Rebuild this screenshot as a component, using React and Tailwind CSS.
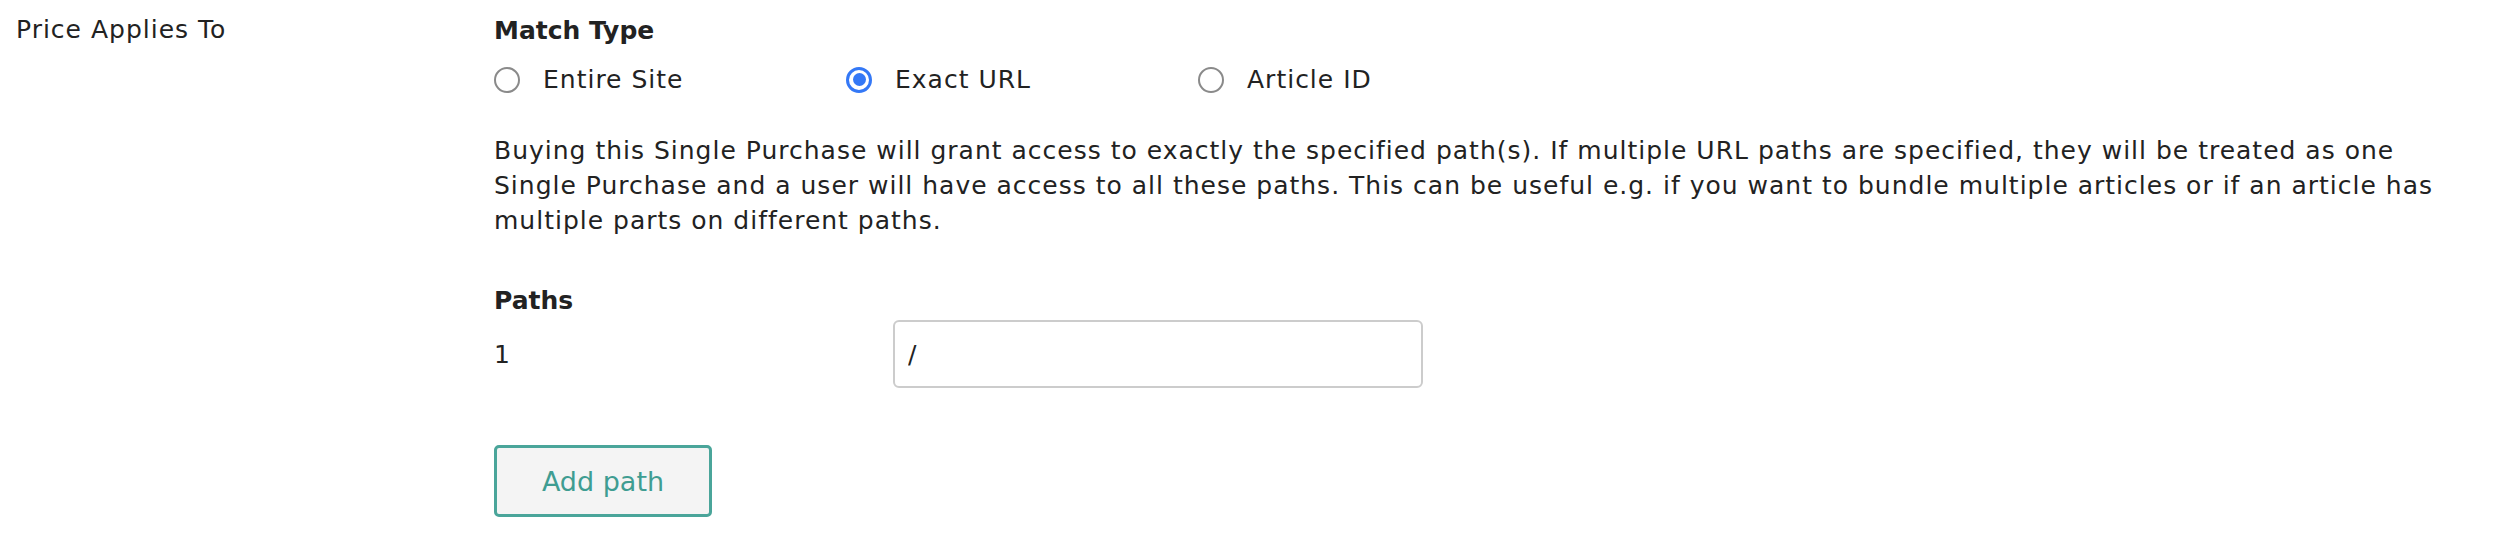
import { useState } from 'react';

const options = [
  { id: 'site', label: 'Entire Site' },
  { id: 'url', label: 'Exact URL' },
  { id: 'article', label: 'Article ID' },
];

function Radio({ checked }) {
  if (checked) {
    return (
      <span className="w-[26px] h-[26px] rounded-full border-[3px] border-[#3478f6] flex items-center justify-center shrink-0">
        <span className="w-[13px] h-[13px] rounded-full bg-[#3478f6]" />
      </span>
    );
  }
  return <span className="w-[26px] h-[26px] rounded-full border-2 border-[#8a8a8a] shrink-0" />;
}

export default function App() {
  const [matchType, setMatchType] = useState('url');
  const [paths, setPaths] = useState(['/']);

  return (
    <div className="w-[2500px] h-[544px] bg-white flex font-['DejaVu_Sans',sans-serif] text-[25px] leading-[35px] tracking-[1px] text-[#222]">
      <div className="w-[494px] shrink-0 pl-[16px] pt-[12px]">Price Applies To</div>

      <div className="flex-1 pr-[40px] pt-[13px]">
        <div className="font-bold tracking-normal">Match Type</div>

        <div className="flex mt-[14px]">
          {options.map((o) => (
            <label
              key={o.id}
              className="w-[352px] flex items-center gap-[23px] cursor-pointer"
              onClick={() => setMatchType(o.id)}
            >
              <Radio checked={matchType === o.id} />
              <span>{o.label}</span>
            </label>
          ))}
        </div>

        <p className="mt-[36px] max-w-[1960px]">
          Buying this Single Purchase will grant access to exactly the specified path(s). If multiple URL paths are
          specified, they will be treated as one Single Purchase and a user will have access to all these paths. This
          can be useful e.g. if you want to bundle multiple articles or if an article has multiple parts on different
          paths.
        </p>

        <div className="mt-[45px] font-bold tracking-normal">Paths</div>

        {paths.map((p, i) => (
          <div key={i} className="flex items-center mt-[2px]">
            <div className="w-[399px] shrink-0">{i + 1}</div>
            <input
              value={p}
              onChange={(e) => setPaths(paths.map((x, j) => (j === i ? e.target.value : x)))}
              className="w-[530px] h-[68px] border-2 border-[#cccccc] rounded-[6px] px-[13px] text-[25px] text-[#222] outline-none"
            />
          </div>
        ))}

        <button
          onClick={() => setPaths([...paths, ''])}
          className="mt-[57px] w-[218px] h-[72px] border-[3px] border-[#4aa59a] bg-[#f4f4f4] rounded-[5px] text-[#3f9d92] text-[27px] tracking-normal"
        >
          Add path
        </button>
      </div>
    </div>
  );
}
